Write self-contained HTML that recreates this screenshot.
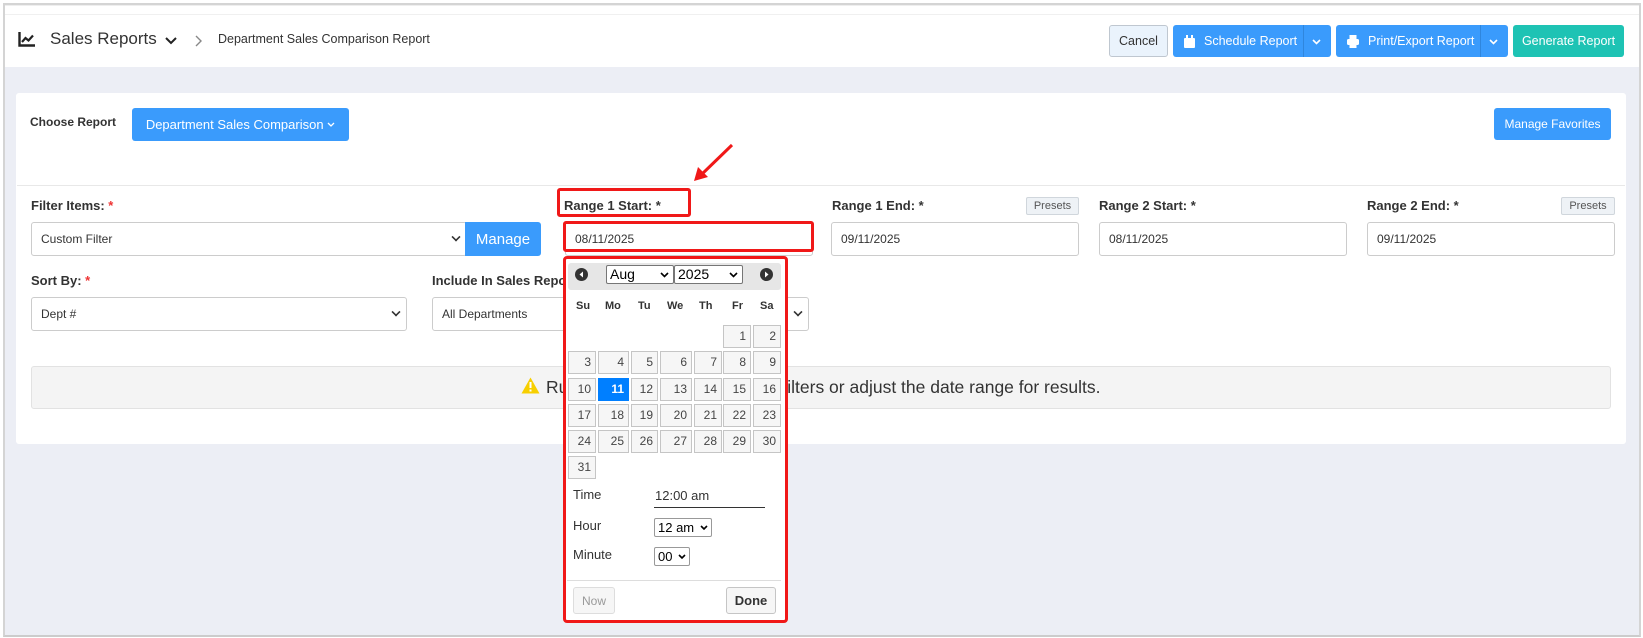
<!DOCTYPE html>
<html><head><meta charset="utf-8"><style>
*{box-sizing:border-box;margin:0;padding:0}
body{width:1643px;height:638px;background:#fff;font-family:"Liberation Sans",Arial,sans-serif;color:#333;position:relative;overflow:hidden}
.a{position:absolute}
.frame{left:3px;top:3px;width:1638px;height:634px;border:2px solid #d4d4d4;border-bottom:2px solid #ccc;background:#eceef5}
.hdr{left:5px;top:5px;width:1634px;height:62px;background:#fff;border-top:1px solid #eee}
.btn{position:absolute;border-radius:3px;color:#fff;font-size:12.5px;display:flex;align-items:center;justify-content:center}
.blue{background:#3a9bfc}
.card{left:16px;top:93px;width:1610px;height:351px;background:#fff;border-radius:3px}
.lbl{position:absolute;font-size:13px;font-weight:bold;color:#333}
.req{color:#e33}
.inp{position:absolute;height:34px;border:1px solid #ccc;border-radius:3px;background:#fff;font-size:12px;color:#333;padding-left:9px;display:flex;align-items:center}
.car{position:absolute;right:6px;top:10px;width:8px;height:8px;border-right:2px solid #333;border-bottom:2px solid #333;transform:rotate(45deg) scale(.8)}
.preset{position:absolute;height:18px;background:#eef2f6;border:1px solid #d0d6dc;border-radius:2px;font-size:11px;color:#555;display:flex;align-items:center;justify-content:center}
.red{position:absolute;border:3px solid #f01818;border-radius:3px}
.cell{position:absolute;height:23px;background:#f6f6f6;border:1px solid #c5c5c5;font-size:12px;color:#454545;text-align:right;padding-right:4px;line-height:21px}
.dn{position:absolute;top:300px;font-size:11px;font-weight:bold;color:#333}
.sel{position:absolute;border:1px solid #767676;border-radius:2px;background:#fff;font-size:14px;color:#000;padding-left:3px;line-height:17px}
</style></head><body>
<div class="a frame"></div>
<div class="a hdr"></div>
<div class="a" style="left:5px;top:14px;width:1634px;height:1px;background:#f0f0f0"></div>
<svg class="a" style="left:18px;top:32px" width="17" height="15" viewBox="0 0 17 15"><path d="M1.5 0v13.5H17" stroke="#222" stroke-width="2.4" fill="none"/><path d="M4 10l3.5-4 3 2.5L15 3.5" stroke="#222" stroke-width="2.2" fill="none"/></svg>
<div class="a" style="left:50px;top:29px;font-size:17px;color:#333">Sales Reports</div>
<svg class="a" style="left:165px;top:37px" width="12" height="8"><path d="M1 1l5 5 5-5" stroke="#222" stroke-width="2" fill="none"/></svg>
<svg class="a" style="left:195px;top:35px" width="8" height="12"><path d="M1 1l5 5-5 5" stroke="#888" stroke-width="1.4" fill="none"/></svg>
<div class="a" style="left:218px;top:32px;font-size:12.5px;color:#333">Department Sales Comparison Report</div>

<div class="btn" style="left:1109px;top:25px;width:59px;height:32px;background:#eaf3fc;border:1px solid #bfc7d0;color:#333">Cancel</div>
<div class="btn blue" style="left:1173px;top:25px;width:158px;height:32px;justify-content:flex-start;padding-left:11px"><svg width="11" height="13" viewBox="0 0 11 13"><rect x="0" y="3" width="11" height="10" rx="1" fill="#fff"/><rect x="2" y="0" width="2" height="4" fill="#fff"/><rect x="7" y="0" width="2" height="4" fill="#fff"/></svg><span style="margin-left:9px">Schedule Report</span><svg style="position:absolute;right:10px;top:14px" width="9" height="6"><path d="M1 1l3.5 3.5L8 1" stroke="#fff" stroke-width="1.6" fill="none"/></svg></div>
<div class="a" style="left:1303px;top:25px;width:1px;height:32px;background:#2f86dd"></div>
<div class="btn blue" style="left:1336px;top:25px;width:172px;height:32px;justify-content:flex-start;padding-left:11px"><svg width="12" height="13" viewBox="0 0 12 13"><rect x="2.5" y="0" width="7" height="4" fill="#fff"/><rect x="0" y="4" width="12" height="6" rx="1.5" fill="#fff"/><rect x="2.5" y="8" width="7" height="5" fill="#fff"/></svg><span style="margin-left:9px">Print/Export Report</span><svg style="position:absolute;right:10px;top:14px" width="9" height="6"><path d="M1 1l3.5 3.5L8 1" stroke="#fff" stroke-width="1.6" fill="none"/></svg></div>
<div class="a" style="left:1480px;top:25px;width:1px;height:32px;background:#2f86dd"></div>
<div class="btn" style="left:1513px;top:25px;width:111px;height:32px;background:#1ec3b4">Generate Report</div>

<div class="a card"></div>
<div class="a" style="left:30px;top:115px;font-size:12px;font-weight:bold;color:#333">Choose Report</div>
<div class="btn blue" style="left:132px;top:108px;width:217px;height:33px;font-size:13px">Department Sales Comparison&nbsp;<svg width="8" height="5"><path d="M1 1l3 3 3-3" stroke="#fff" stroke-width="1.3" fill="none"/></svg></div>
<div class="btn blue" style="left:1494px;top:108px;width:117px;height:32px;font-size:12px">Manage Favorites</div>
<div class="a" style="left:17px;top:185px;width:1608px;height:1px;background:#e8e8e8"></div>

<div class="lbl" style="left:31px;top:198px">Filter Items: <span class="req">*</span></div>
<div class="inp" style="left:31px;top:222px;width:436px">Custom Filter<div class="car"></div></div>
<div class="btn blue" style="left:465px;top:222px;width:76px;height:34px;font-size:15px;border-radius:0 3px 3px 0">Manage</div>

<div class="lbl" style="left:564px;top:198px">Range 1 Start: *</div>
<div class="inp" style="left:565px;top:222px;width:248px">08/11/2025</div>
<div class="red" style="left:557px;top:188px;width:134px;height:29px"></div>
<div class="red" style="left:563px;top:221px;width:251px;height:31px"></div>

<div class="lbl" style="left:832px;top:198px">Range 1 End: *</div>
<div class="preset" style="left:1026px;top:197px;width:53px">Presets</div>
<div class="inp" style="left:831px;top:222px;width:248px">09/11/2025</div>
<div class="lbl" style="left:1099px;top:198px">Range 2 Start: *</div>
<div class="inp" style="left:1099px;top:222px;width:248px">08/11/2025</div>
<div class="lbl" style="left:1367px;top:198px">Range 2 End: *</div>
<div class="preset" style="left:1561px;top:197px;width:54px">Presets</div>
<div class="inp" style="left:1367px;top:222px;width:248px">09/11/2025</div>

<div class="lbl" style="left:31px;top:273px">Sort By: <span class="req">*</span></div>
<div class="inp" style="left:31px;top:297px;width:376px">Dept #<div class="car"></div></div>
<div class="lbl" style="left:432px;top:273px">Include In Sales Report</div>
<div class="inp" style="left:432px;top:297px;width:377px">All Departments<div class="car"></div></div>

<div class="a" style="left:31px;top:366px;width:1580px;height:43px;background:#f4f4f4;border:1px solid #e2e2e2;border-radius:3px"></div>
<svg class="a" style="left:521px;top:377px" width="19" height="17" viewBox="0 0 19 17"><path d="M9.5 0.5L18.5 16.5H0.5z" fill="#f7cf00"/><rect x="8.5" y="5" width="2" height="6" fill="#fff"/><rect x="8.5" y="12.5" width="2" height="2" fill="#fff"/></svg>
<div class="a" style="left:546px;top:377px;font-size:17.5px;color:#333">Run report using the following filters or adjust the date range for results.</div>

<!-- calendar -->
<div class="a" style="left:565px;top:258px;width:221px;height:364px;background:#fff;border:1px solid #ccc"></div>
<div class="a" style="left:568px;top:263px;width:213px;height:27px;background:#e6e6e6;border-radius:3px"></div>
<svg class="a" style="left:575px;top:268px" width="13" height="13"><circle cx="6.5" cy="6.5" r="6.5" fill="#333"/><path d="M8 3.5L4.5 6.5 8 9.5z" fill="#fff"/></svg>
<svg class="a" style="left:760px;top:268px" width="13" height="13"><circle cx="6.5" cy="6.5" r="6.5" fill="#333"/><path d="M5 3.5L8.5 6.5 5 9.5z" fill="#fff"/></svg>
<div class="sel" style="left:606px;top:265px;width:68px;height:19px">Aug<svg style="position:absolute;right:4px;top:6px" width="9" height="6"><path d="M1 1l3.5 3.5L8 1" stroke="#000" stroke-width="1.6" fill="none"/></svg></div>
<div class="sel" style="left:674px;top:265px;width:69px;height:19px">2025<svg style="position:absolute;right:4px;top:6px" width="9" height="6"><path d="M1 1l3.5 3.5L8 1" stroke="#000" stroke-width="1.6" fill="none"/></svg></div>
<div class="dn" style="left:576px">Su</div><div class="dn" style="left:605px">Mo</div><div class="dn" style="left:638px">Tu</div><div class="dn" style="left:667px">We</div><div class="dn" style="left:699px">Th</div><div class="dn" style="left:732px">Fr</div><div class="dn" style="left:760px">Sa</div>
<div class="cell" style="left:723px;top:325px;width:28px">1</div><div class="cell" style="left:753px;top:325px;width:28px">2</div>
<div class="cell" style="left:568px;top:351px;width:28px">3</div><div class="cell" style="left:598px;top:351px;width:31px">4</div><div class="cell" style="left:631px;top:351px;width:27px">5</div><div class="cell" style="left:660px;top:351px;width:32px">6</div><div class="cell" style="left:694px;top:351px;width:28px">7</div><div class="cell" style="left:723px;top:351px;width:28px">8</div><div class="cell" style="left:753px;top:351px;width:28px">9</div>
<div class="cell" style="left:568px;top:378px;width:28px">10</div><div class="cell" style="left:598px;top:378px;width:31px;background:#007fff;border-color:#007fff;color:#fff;font-weight:bold">11</div><div class="cell" style="left:631px;top:378px;width:27px">12</div><div class="cell" style="left:660px;top:378px;width:32px">13</div><div class="cell" style="left:694px;top:378px;width:28px">14</div><div class="cell" style="left:723px;top:378px;width:28px">15</div><div class="cell" style="left:753px;top:378px;width:28px">16</div>
<div class="cell" style="left:568px;top:404px;width:28px">17</div><div class="cell" style="left:598px;top:404px;width:31px">18</div><div class="cell" style="left:631px;top:404px;width:27px">19</div><div class="cell" style="left:660px;top:404px;width:32px">20</div><div class="cell" style="left:694px;top:404px;width:28px">21</div><div class="cell" style="left:723px;top:404px;width:28px">22</div><div class="cell" style="left:753px;top:404px;width:28px">23</div>
<div class="cell" style="left:568px;top:430px;width:28px">24</div><div class="cell" style="left:598px;top:430px;width:31px">25</div><div class="cell" style="left:631px;top:430px;width:27px">26</div><div class="cell" style="left:660px;top:430px;width:32px">27</div><div class="cell" style="left:694px;top:430px;width:28px">28</div><div class="cell" style="left:723px;top:430px;width:28px">29</div><div class="cell" style="left:753px;top:430px;width:28px">30</div>
<div class="cell" style="left:568px;top:456px;width:28px">31</div>
<div class="a" style="left:573px;top:487px;font-size:13px">Time</div>
<div class="a" style="left:655px;top:488px;font-size:13px">12:00 am</div>
<div class="a" style="left:654px;top:507px;width:111px;height:1px;background:#333"></div>
<div class="a" style="left:573px;top:518px;font-size:13px">Hour</div>
<div class="sel" style="left:654px;top:518px;width:58px;height:19px;font-size:13px;border-color:#999">12 am<svg style="position:absolute;right:3px;top:6px" width="8" height="6"><path d="M1 1l3 3 3-3" stroke="#000" stroke-width="1.6" fill="none"/></svg></div>
<div class="a" style="left:573px;top:547px;font-size:13px">Minute</div>
<div class="sel" style="left:654px;top:547px;width:36px;height:19px;font-size:13px;border-color:#999">00<svg style="position:absolute;right:3px;top:6px" width="8" height="6"><path d="M1 1l3 3 3-3" stroke="#000" stroke-width="1.6" fill="none"/></svg></div>
<div class="a" style="left:567px;top:580px;width:214px;height:1px;background:#ddd"></div>
<div class="btn" style="left:573px;top:587px;width:42px;height:27px;background:#f6f6f6;border:1px solid #ddd;color:#999;font-size:12px">Now</div>
<div class="btn" style="left:726px;top:587px;width:50px;height:27px;background:#f6f6f6;border:1px solid #c5c5c5;color:#333;font-size:13px;font-weight:bold">Done</div>
<div class="red" style="left:563px;top:256px;width:225px;height:367px;border-radius:4px"></div>

<svg class="a" style="left:690px;top:143px" width="45" height="40"><path d="M42 2L10 33" stroke="#f01818" stroke-width="3"/><path d="M4 38L8 24 18 34z" fill="#f01818"/></svg>
</body></html>
